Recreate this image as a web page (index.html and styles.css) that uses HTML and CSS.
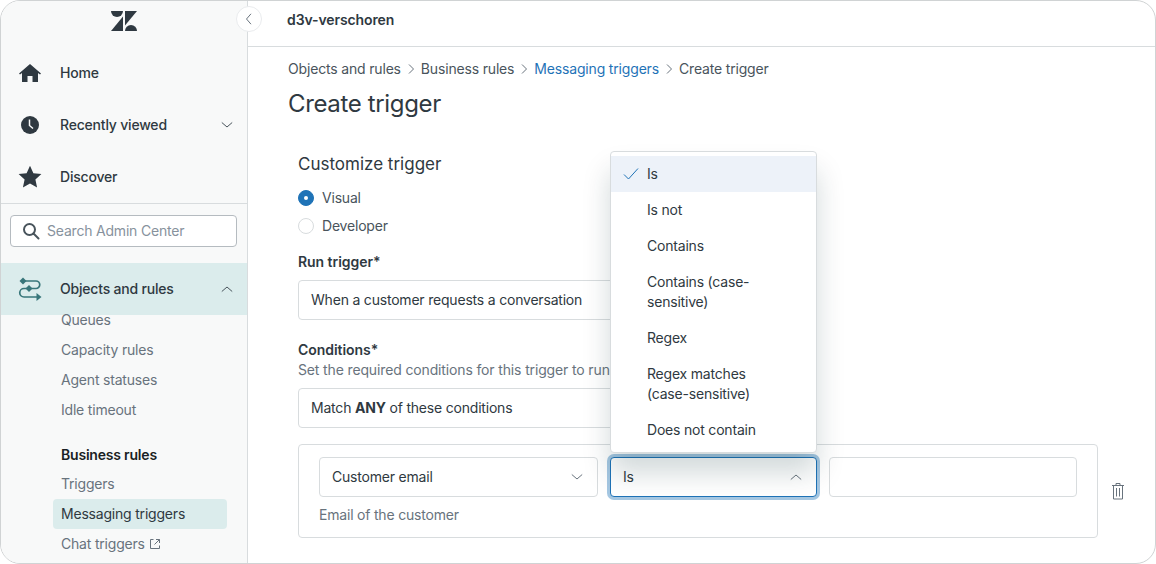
FILE: index.html
```html
<!DOCTYPE html>
<html lang="en">
<head>
<meta charset="utf-8">
<title>Create trigger</title>
<link rel="stylesheet" href="styles.css">
</head>
<body>
<div class="frame">
  <aside class="sidebar">
    <div class="logo">
      <svg width="26" height="20" viewBox="0 0 26 20"><path fill="#2f3941" d="M0 0h12a6 6 0 0 1-12 0Z"/><path fill="#2f3941" d="M14 20a6 6 0 0 1 12 0Z"/><path fill="#2f3941" d="M12 5.500V20H0Z"/><path fill="#2f3941" d="M14 14.500V0h12Z"/></svg>
    </div>
    <nav class="primary">
      <div class="nav-item">
        <svg class="nav-icon" width="24" height="24" viewBox="0 0 24 24"><path fill="#2f3941" d="M12 3 1 12.500l1 1 2-1.500v9h5.500v-6h5v6H20v-9l2 1.500 1-1Z"/></svg>
        <span>Home</span>
      </div>
      <div class="nav-item">
        <svg class="nav-icon" width="24" height="24" viewBox="0 0 24 24"><circle cx="12" cy="12" r="9" fill="#2f3941"/><path d="M11.500 6.500V12.500l3.500 3" fill="none" stroke="#f8f9f9" stroke-width="1.500"/></svg>
        <span class="grow">Recently viewed</span>
        <svg class="chev" width="12" height="12" viewBox="0 0 12 12"><path d="M.8 3.500 6 8l5.200-4.500" fill="none" stroke="#49545c" stroke-width="1"/></svg>
      </div>
      <div class="nav-item">
        <svg class="nav-icon" width="24" height="24" viewBox="0 0 24 24"><path fill="#2f3941" d="m12 .8 3.400 7.400 8 .9-6 5.400 1.700 8L12 18.500l-7.100 4 1.700-8-6-5.400 8-.9Z"/></svg>
        <span>Discover</span>
      </div>
    </nav>
    <div class="search-wrap">
      <div class="search">
        <svg width="18" height="18" viewBox="0 0 18 18"><circle cx="7.500" cy="7.500" r="5.500" fill="none" stroke="#49545c" stroke-width="2"/><path d="m11.500 11.500 5 5" stroke="#49545c" stroke-width="2" stroke-linecap="round"/></svg>
        <span>Search Admin Center</span>
      </div>
    </div>
    <div class="nav-item active">
      <svg class="nav-icon" width="24" height="24" viewBox="0 0 24 24"><path d="M5 4h13a3.500 3.500 0 0 1 0 7.500H6a4.200 4.200 0 0 0 0 8.500h15" fill="none" stroke="#38767a" stroke-width="1.700"/><g fill="#38767a"><path d="M1.500 4 5 .5 8.500 4 5 7.500Z"/><path d="M7.500 11.500 11 8l3.500 3.500L11 15Z"/><path d="M18.500 16l5 4-5 4Z"/></g></svg>
      <span class="grow">Objects and rules</span>
      <svg class="chev" width="12" height="12" viewBox="0 0 12 12"><path d="M.8 8.500 6 4l5.200 4.500" fill="none" stroke="#49545c" stroke-width="1"/></svg>
    </div>
    <ul class="subnav">
      <li>Queues</li>
      <li>Capacity rules</li>
      <li>Agent statuses</li>
      <li>Idle timeout</li>
      <li class="group">Business rules</li>
      <li>Triggers</li>
      <li class="current">Messaging triggers</li>
      <li>Chat triggers
        <svg class="ext" width="12" height="12" viewBox="0 0 12 12"><path d="M4.500 1.500H1.500v9h9V7.500M7 1.500h3.500V5M10.500 1.500 5.500 6.500" fill="none" stroke="#68737d" stroke-width="1"/></svg>
      </li>
    </ul>
  </aside>
  <button class="collapse" aria-label="Collapse">
    <svg width="12" height="12" viewBox="0 0 12 12"><path d="M8 .8 3.500 6 8 11.200" fill="none" stroke="#68737d" stroke-width="1"/></svg>
  </button>
  <div class="content">
    <header class="topbar">d3v-verschoren</header>
    <main class="main">
      <div class="crumbs">
        <span>Objects and rules</span><svg width="12" height="12" viewBox="0 0 12 12"><path d="M4 1.500 8.500 6 4 10.500" fill="none" stroke="#68737d"/></svg>
        <span>Business rules</span><svg width="12" height="12" viewBox="0 0 12 12"><path d="M4 1.500 8.500 6 4 10.500" fill="none" stroke="#68737d"/></svg>
        <span class="link">Messaging triggers</span><svg width="12" height="12" viewBox="0 0 12 12"><path d="M4 1.500 8.500 6 4 10.500" fill="none" stroke="#68737d"/></svg>
        <span>Create trigger</span>
      </div>
      <h1>Create trigger</h1>
      <section class="form">
        <h2>Customize trigger</h2>
        <label class="radio"><i class="dot on"></i>Visual</label>
        <label class="radio"><i class="dot"></i>Developer</label>
        <div class="label run">Run trigger*</div>
        <div class="field wide">When a customer requests a conversation</div>
        <div class="label cond">Conditions*</div>
        <div class="hint">Set the required conditions for this trigger to run.</div>
        <div class="field wide">Match&nbsp;<b>ANY</b>&nbsp;of these conditions</div>
        <div class="card">
          <div class="card-row">
            <div class="col">
              <div class="field sel email"><span class="grow">Customer email</span><svg width="12" height="12" viewBox="0 0 12 12"><path d="M.8 3.500 6 8l5.200-4.500" fill="none" stroke="#68737d"/></svg></div>
              <div class="desc">Email of the customer</div>
            </div>
            <div class="field sel focus"><span class="grow">Is</span><svg width="12" height="12" viewBox="0 0 12 12"><path d="M.8 8.500 6 4l5.200 4.500" fill="none" stroke="#68737d"/></svg></div>
            <div class="field value"></div>
          </div>
          <svg class="trash" width="12" height="18" viewBox="0 0 12 18"><path d="M0 3.500h12M4 3.500v-2h4v2M1.500 3.500v13.500h9V3.500M4.500 6v8.500M7.500 6v8.500" fill="none" stroke="#68737d"/></svg>
        </div>
      </section>
    </main>
  </div>
  <ul class="menu">
    <li class="sel-item"><svg width="16" height="16" viewBox="0 0 16 16"><path d="M1 8.500 5.500 13 15 2.500" fill="none" stroke="#1f73b7"/></svg>Is</li>
    <li>Is not</li>
    <li>Contains</li>
    <li>Contains (case-sensitive)</li>
    <li>Regex</li>
    <li>Regex matches (case-sensitive)</li>
    <li>Does not contain</li>
  </ul>
</div>
</body>
</html>
```
FILE: styles.css
```css
* { box-sizing: border-box; }
html, body { margin: 0; height: 100%; background: #fff; }
body { font-family: Inter, "Liberation Sans", sans-serif; font-size: 14px; line-height: 20px; letter-spacing: -.2px; color: #2f3941; overflow: hidden; }
ul { list-style: none; margin: 0; padding: 0; }
.frame { position: relative; width: 1156px; height: 564px; border: 1px solid #d0d3d4; border-radius: 20px; overflow: hidden; display: flex; background: #fff; }
.sidebar { width: 247px; flex: none; background: #f8f9f9; border-right: 1px solid #d8dcde; overflow: hidden; }
.logo { height: 46px; display: flex; justify-content: center; align-items: flex-start; padding-top: 10px; }
.primary { border-bottom: 1px solid #d8dcde; height: 157px; }
.nav-item { height: 52px; display: flex; align-items: center; padding: 0 14px 0 17px; font-weight: 500; font-size: 14px; color: #2f3941; }
.nav-icon { flex: none; margin-right: 18px; }
.grow { flex: 1; }
.chev { flex: none; }
.search-wrap { padding: 11px 10px 16px 9px; }
.search { height: 32px; border: 1px solid #b5bbc0; border-radius: 4px; background: #fff; display: flex; align-items: center; gap: 7px; padding: 0 11px; color: #87929d; }
.active { background: #dbecec; height: 52px; color: #2f3941; }
.subnav { margin-top: -10px; padding-left: 60px; color: #68737d; }
.subnav li { height: 30px; display: flex; align-items: center; gap: 4px; }
.subnav .group { color: #1a1f24; font-weight: 600; margin-top: 15px; height: 29px; }
.subnav .current { background: #dbecec; color: #2f3941; border-radius: 4px; margin-left: -8px; padding-left: 8px; width: 174px; }
.ext { flex: none; }
.collapse { position: absolute; left: 235px; top: 5px; width: 26px; height: 26px; border-radius: 50%; background: #fff; border: 1px solid #e9ebed; padding: 0; display: flex; align-items: center; justify-content: center; z-index: 3; }
.content { flex: 1; min-width: 0; display: flex; flex-direction: column; }
.topbar { height: 46px; flex: none; border-bottom: 1px solid #d8dcde; display: flex; align-items: center; padding: 0 0 7px 39px; font-weight: 600; font-size: 14px; letter-spacing: -.1px; color: #2f3941; }
.main { padding: 12px 0 0 40px; }
.crumbs { display: flex; align-items: center; gap: 4px; height: 20px; color: #49545c; letter-spacing: -.17px; }
.link { color: #1f73b7; }
h1 { margin: 7px 0 0; font-size: 24px; line-height: 36px; font-weight: 400; letter-spacing: -.35px; color: #2f3941; }
.form { margin-top: 30px; padding-left: 10px; }
h2 { margin: 0 0 12px; font-size: 17px; line-height: 24px; font-weight: 400; letter-spacing: 0; color: #2f3941; }
.radio { display: flex; align-items: center; gap: 8px; height: 20px; margin-bottom: 8px; color: #49545c; }
.dot { width: 16px; height: 16px; border-radius: 50%; border: 1px solid #d8dcde; background: #fff; position: relative; }
.dot.on { background: #1f73b7; border-color: #1f73b7; }
.dot.on::after { content: ""; position: absolute; left: 5px; top: 5px; width: 4px; height: 4px; border-radius: 50%; background: #fff; }
.label { font-weight: 600; line-height: 20px; letter-spacing: -.05px; color: #2f3941; }
.run { margin-top: 16px; margin-bottom: 8px; }
.cond { margin-top: 20px; }
.hint { line-height: 20px; color: #68737d; margin-bottom: 8px; white-space: nowrap; letter-spacing: -.14px; }
.field { height: 40px; border: 1px solid #d8dcde; border-radius: 4px; background: #fff; display: flex; align-items: center; padding: 0 12px; color: #2f3941; }
.wide { width: 400px; }
.card { margin-top: 16px; width: 800px; height: 94px; border: 1px solid #d8dcde; border-radius: 4px; padding: 12px 20px; position: relative; }
.card-row { display: flex; align-items: flex-start; gap: 12px; }
.col { flex: none; width: 279px; }
.sel { gap: 8px; }
.email { padding-right: 14px; }
.desc { margin-top: 8px; line-height: 20px; color: #68737d; }
.focus { width: 207px; padding-right: 14px; border-color: #1f73b7; box-shadow: 0 0 0 3px rgba(31,115,183,.4); }
.value { width: 248px; }
.trash { position: absolute; right: -27px; top: 37px; }
.menu { position: absolute; left: 609px; top: 150px; width: 207px; height: 302px; background: #fff; border: 1px solid #d8dcde; border-radius: 4px; padding: 4px 0; box-shadow: 0 20px 28px rgba(4,44,48,.18); z-index: 2; color: #2f3941; }
.menu li { padding: 8px 36px; line-height: 20px; position: relative; }
.sel-item { background: #edf2f9; }
.sel-item svg { position: absolute; left: 12px; top: 10px; }
```
